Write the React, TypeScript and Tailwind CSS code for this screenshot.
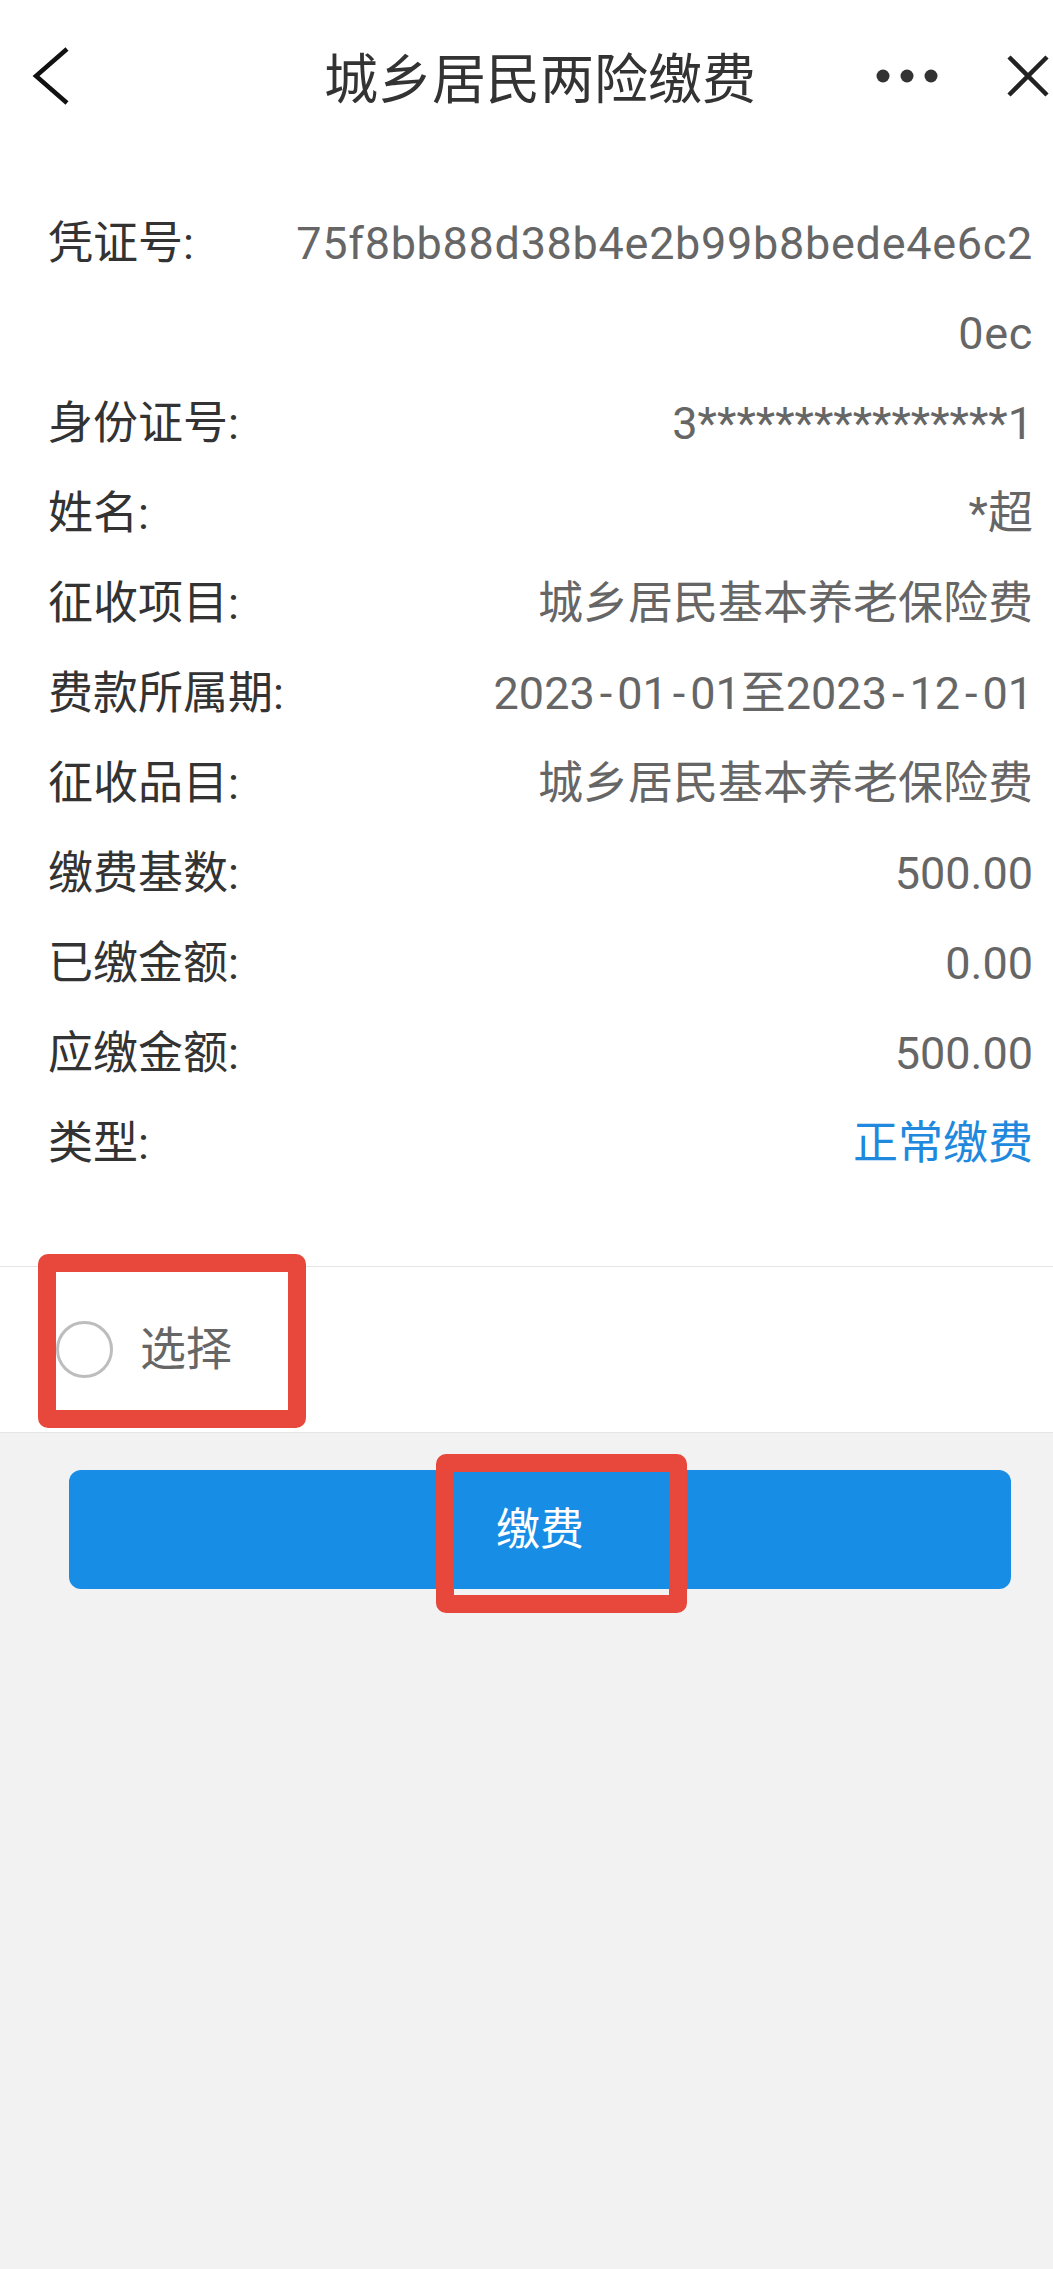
import React from 'react';

// Voucher detail rows
const ROWS: { label: string; value: string; blue?: boolean }[] = [
  { label: '凭证号:', value: '75f8bb88d38b4e2b99b8bede4e6c20ec' },
  { label: '身份证号:', value: '3****************1' },
  { label: '姓名:', value: '*超' },
  { label: '征收项目:', value: '城乡居民基本养老保险费' },
  { label: '费款所属期:', value: '2023-01-01至2023-12-01' },
  { label: '征收品目:', value: '城乡居民基本养老保险费' },
  { label: '缴费基数:', value: '500.00' },
  { label: '已缴金额:', value: '0.00' },
  { label: '应缴金额:', value: '500.00' },
  { label: '类型:', value: '正常缴费', blue: true },
];

const FONT = "font-['Roboto','Noto_Sans_CJK_SC',sans-serif]";

// hyphens in the reference font are wider than Roboto's
function renderValue(value: string) {
  if (!value.includes('-')) return value;
  return value.split('-').map((part, i) => (
    <React.Fragment key={i}>
      {i > 0 && <span className="mx-[5px]">-</span>}
      {part}
    </React.Fragment>
  ));
}

function Header() {
  return (
    <header className="h-[152px] flex items-center bg-white">
      <div className="w-[220px] pl-[30px] flex items-center">
        <svg width="44" height="64" viewBox="0 0 44 64" fill="none">
          <path d="M37 5 L6 32 L37 59" stroke="#111" strokeWidth="4.5" />
        </svg>
      </div>
      <h1 className="flex-1 text-center text-[54px] text-[#333] leading-none pt-[10px]">城乡居民两险缴费</h1>
      <div className="w-[193px] flex items-center">
        <svg className="ml-[16px]" width="62" height="14" viewBox="0 0 62 14">
          <circle cx="7" cy="7" r="6.5" fill="#333" />
          <circle cx="31" cy="7" r="6.5" fill="#333" />
          <circle cx="55" cy="7" r="6.5" fill="#333" />
        </svg>
        <svg className="ml-[67px]" width="46" height="46" viewBox="0 0 46 46" fill="none">
          <path d="M4 4 L42 42 M42 4 L4 42" stroke="#222" strokeWidth="4.5" />
        </svg>
      </div>
    </header>
  );
}

export default function App() {
  return (
    <div className={`relative min-h-screen flex flex-col bg-[#f2f2f2] ${FONT}`}>
      <div className="bg-white">
        <Header />

        {/* Detail list */}
        <section className="pl-[48px] pr-[20px] pt-[47px] pb-[77px]">
          {ROWS.map((row, i) => (
            <div key={row.label} className="flex items-start leading-[90px] text-[45px]">
              <div className="w-[240px] shrink-0 text-[#333]">{row.label}</div>
              <div
                className={`flex-1 min-w-0 text-right break-all ${i === 0 ? 'tracking-[0.7px]' : ''} ${row.blue ? 'text-[#2189dd]' : 'text-[#666]'}`}
              >
                {renderValue(row.value)}
              </div>
            </div>
          ))}
        </section>

        {/* Select row */}
        <div className="h-[167px] border-t border-b border-[#e5e5e5] flex items-center pl-[56px]">
          <div className="w-[57px] h-[57px] rounded-full border-[3px] border-[#bdbdbd]" />
          <span className="ml-[27px] text-[46px] text-[#666]">选择</span>
        </div>
      </div>

      <div className="flex-1 pt-[37px]">
        <button className="ml-[69px] mr-[42px] w-[942px] h-[119px] rounded-[12px] bg-[#188de6] text-white text-[44px] flex items-center justify-center">
          缴费
        </button>
      </div>

      {/* Red annotation boxes */}
      <div className="absolute left-[38px] top-[1254px] w-[268px] h-[174px] border-[18px] border-[#e8483b] rounded-[10px]" />
      <div className="absolute left-[436px] top-[1454px] w-[251px] h-[159px] border-[18px] border-[#e8483b] rounded-[10px]" />
    </div>
  );
}
